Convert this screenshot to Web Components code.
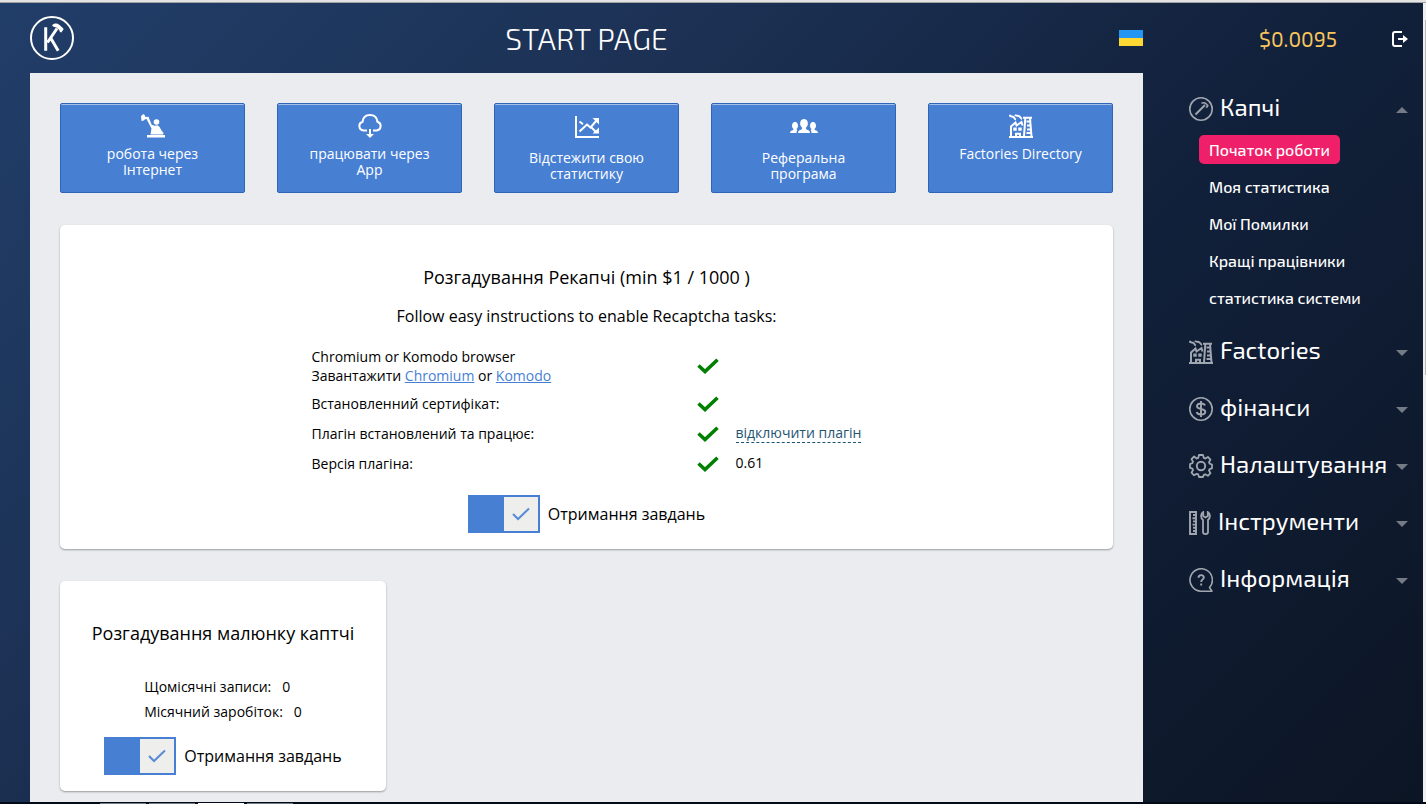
<!DOCTYPE html>
<html lang="uk">
<head>
<meta charset="utf-8">
<title>Start page</title>
<style>
  html, body { margin: 0; height: 100%; }
  body { background: #0d1626; font-family: "Open Sans", "Noto Sans", sans-serif; color: #000; }
</style>
</head>
<body>
<kb-app></kb-app>
<script>
const ICONS = {
  logo: ['0 0 44 44', '<circle cx="22" cy="22" r="21" fill="none" stroke="#fff" stroke-width="2"/><path d="M15.700 11.300v23.400M17.500 26.500l9.500-14M21 22.500l7.200 12.200" fill="none" stroke="#fff" stroke-width="3"/><path d="M22 9.300c2-2.300 5.200-2.400 7.500-.4l3.700 3.300.3 1.300-2.300 3-1.300-.4-.6-2-3-2.600-2.800-.7z" fill="#fff"/>'],
  worker: ['0 0 24 24', '<path d="M0 2l2.500-2 1.500 1.500.5 2.500-1.500 2.500-2.500.5zM4 3l3.500-.2 3.200 8 3 1 3-.5 2.300 2.200 2.500 7h-12l1-6-5-9.500-2 .5z" fill="currentColor"/><circle cx="15.500" cy="8" r="2.800" fill="currentColor"/><path d="M6 21h18v2.500H6z" fill="currentColor"/><path d="M17.500 14.500l4.500 5.500" stroke="currentColor" stroke-width="2"/>'],
  cloud: ['0 0 24 24', '<path d="M9 16.500H5.500A4.500 4.500 0 0 1 4.600 7.700 C5 3.500 8 1 12 1s7 2.500 7.400 6.700a4.500 4.500 0 0 1-.9 8.800H15" fill="none" stroke="currentColor" stroke-width="2"/><path d="M11 15h2v5h3l-4 4-4-4h3z" fill="currentColor"/>'],
  chart: ['0 0 28 28', '<path d="M3 2v21h23" fill="none" stroke="currentColor" stroke-width="2"/><path d="M6.500 17.500l7.500-7 3.500 3 6-7M6.500 7.500l3.500 2.800M18.500 13.500l4 4" fill="none" stroke="currentColor" stroke-width="2"/><path d="M19.500 4H26v6.500zM26 13.500v6h-6.500z" fill="currentColor"/>'],
  people: ['0 0 28 28', '<path d="M8 19c.3-2.500 1.500-2.800 3.500-3.500l.8-1.500c-2-2-2.500-3.500-2-6C11 5.700 12.300 5 14 5s3 .7 3.700 3c.5 2.500 0 4-2 6l.8 1.500c2 .7 3.200 1 3.500 3.500z" fill="currentColor"/><path d="M0 19c.2-2 1.300-2.300 3.200-3l.3-1c-1.500-1.500-1.800-3-1.300-4.800C2.800 8.500 3.800 8 5 8s2.300.5 2.800 2.200c.5 1.800.2 3.300-1.300 4.800l.8.9C6.800 17 6.500 18 6.500 19zM28 19c-.2-2-1.300-2.300-3.200-3l-.3-1c1.500-1.500 1.800-3 1.300-4.800C25.200 8.500 24.200 8 23 8s-2.300.5-2.800 2.200c-.5 1.800-.2 3.300 1.300 4.800l-.8.9c.5 1.100.8 2.100.8 3.100z" fill="currentColor"/>'],
  factory: ['0 0 24 24', '<path d="M0 23h24M2 23V12.500L6.500 8.500l1 3L12.500 8l1 3.500M15 22.500L16.300 4M21 4l1.500 18.500M14 3.800h9M17.500 7.500h3M18 11.500h3.500M18 15.500h3.500M17.500 19h4M7 22.500v-2.800h4v2.800" fill="none" stroke="currentColor" stroke-width="2"/><path d="M4.300 13.500h3.400v3.200H4.300zM9.300 13.500h3.400v3.200H9.300z" fill="currentColor"/><path d="M.5.800c.5 2.500 2.500 1 4 2.200s.7 2 2.500 2.500M6 .8c1 1.700 3 .5 4.500 1.700S12 4.500 13 5" fill="none" stroke="currentColor" stroke-width="2"/>'],
  hammer: ['0 0 24 24', '<circle cx="12" cy="12" r="11.200" fill="none" stroke="currentColor" stroke-width="1.600"/><path d="M6.500 17.500L16 8" stroke="currentColor" stroke-width="2"/><path d="M12.500 6.200c2-.8 3.500-.5 4.500.5l1.800 1.800-1.500 2.300" fill="none" stroke="currentColor" stroke-width="1.600"/>'],
  dollar: ['0 0 24 24', '<circle cx="12" cy="12" r="11.200" fill="none" stroke="currentColor" stroke-width="1.600"/><path d="M16 8.500C15.500 7 14 6.500 12 6.500c-2.300 0-4 .8-4 2.700 0 3.800 8.300 1.800 8.300 5.600 0 1.900-1.800 2.700-4.300 2.700-2.300 0-3.800-.7-4.300-2.500M12 4v16" fill="none" stroke="currentColor" stroke-width="1.900"/>'],
  gear: ['0 0 24 24', '<path d="M10 1h4l.8 2.900 1.500.6 2.600-1.500 2.600 2.600-1.500 2.600.6 1.500 2.400.8v3.800l-2.400.8-.6 1.500 1.500 2.600-2.600 2.600-2.600-1.500-1.500.6L14 23h-4l-.8-2.600-1.500-.6-2.600 1.500-2.600-2.600L4 16.100l-.6-1.500-2.400-.8V10l2.400-.8L4 7.700 2.500 5.100l2.600-2.600L7.700 4.500l1.500-.6z" fill="none" stroke="currentColor" stroke-width="1.800" stroke-linejoin="round"/><circle cx="12" cy="12" r="4.200" fill="none" stroke="currentColor" stroke-width="1.900"/>'],
  tools: ['0 0 22 24', '<path d="M1 1h6v22H1zM7 4H4M7 7.200H3.500M7 10.400H4M7 13.600H3.500M7 16.800H4M7 20H4" fill="none" stroke="currentColor" stroke-width="1.900"/><path d="M14.200 1v4l2.300 1.500L18.800 5V1c2.500 1.500 3 5.500.2 8v12c0 2.700-5 2.700-5 0V9c-2.800-2.500-2.300-6.500.2-8z" fill="none" stroke="currentColor" stroke-width="1.800"/>'],
  help: ['0 0 24 24', '<path d="M20.500 19.500A11.200 11.200 0 1 0 12 23.200h11z" fill="none" stroke="currentColor" stroke-width="1.600" stroke-linejoin="round"/><path d="M9.500 9.800c0-3.500 5.300-3.500 5.300-.4 0 2-2.600 2-2.600 4.600M12.200 15.600v2" fill="none" stroke="currentColor" stroke-width="1.900"/>'],
  exit: ['0 0 16 16', '<path d="M10 1H3a2 2 0 0 0-2 2v10a2 2 0 0 0 2 2h7" fill="none" stroke="currentColor" stroke-width="2"/><path d="M6 7h5V4l5 4-5 4V9H6z" fill="currentColor"/>'],
  tick: ['0 0 22 16', '<path d="M1.500 7.500L8 13.500 20.500 1.800" fill="none" stroke="#008000" stroke-width="3.600"/>'],
  thin: ['0 0 18 14', '<path d="M1 7l5 5L17 1.500" fill="none" stroke="#477fd3" stroke-opacity=".9" stroke-width="2"/>'],
  up: ['0 0 12 6', '<path d="M0 6l6-6 6 6z" fill="currentColor"/>'],
  down: ['0 0 12 6', '<path d="M0 0l6 6 6-6z" fill="currentColor"/>']
};
const icon = (name, w, h = w) => `<svg aria-hidden="true" width="${w}" height="${h}" viewBox="${ICONS[name][0]}">${ICONS[name][1]}</svg>`;
const define = (name, render) => customElements.define(name, class extends HTMLElement {
  connectedCallback() {
    if (!this.shadowRoot) this.attachShadow({ mode: 'open' }).innerHTML = render(this);
  }
});

define('kb-tile', el => `
<style>
  :host { display: block; flex: 1; }
  a { box-sizing: border-box; display: flex; flex-direction: column; align-items: center; gap: 8px; height: 90px; padding: 10px 28px 0; border: 1px solid #2f65b9; border-radius: 2px; background: #477fd3; box-shadow: inset 0 1px #a3bfe9; color: #fff; font-size: 14px; line-height: 16px; text-align: center; text-decoration: none; }
  svg { flex: none; }
</style>
<a href="#">${icon(el.getAttribute('icon'), +el.getAttribute('size') || 24)}<span><slot></slot></span></a>`);

define('kb-card', () => `
<style>
  :host { display: block; box-sizing: border-box; padding: 40px 16px 16px; background: #fff; border-radius: 5px; box-shadow: 0 1px 2px rgba(0,0,0,.35); }
  h2 { margin: 0; font-size: 18px; line-height: 24px; font-weight: 400; text-align: center; white-space: nowrap; }
</style>
<h2><slot name="title"></slot></h2><slot></slot>`);

define('kb-toggle', () => `
<style>
  :host { display: flex; justify-content: center; }
  label { display: flex; align-items: center; gap: 8px; font-size: 16px; line-height: 24px; white-space: nowrap; }
  .box { position: relative; display: flex; }
  input { appearance: none; box-sizing: border-box; margin: 0; width: 72px; height: 38px; border: 2px solid #477fd3; background: linear-gradient(90deg, #477fd3 50%, #eeeeed 50%); }
  svg { position: absolute; right: 10px; top: 12px; pointer-events: none; }
</style>
<label><span class="box"><input type="checkbox" checked>${icon('thin', 18, 14)}</span><span><slot></slot></span></label>`);

define('kb-requirements', () => {
  const row = (label, extra = '') => `<tr><th scope="row">${label}</th><td class="ok">${icon('tick', 22, 16)}</td><td class="extra">${extra}</td></tr>`;
  return `
<style>
  :host { display: block; margin: 15px 0 16px; }
  p { margin: 0 0 15px; font-size: 16px; line-height: 24px; text-align: center; }
  table { border-collapse: collapse; table-layout: fixed; width: 550px; margin: 0 auto; font-size: 14px; line-height: 19px; }
  tr { height: 30px; } tr:first-child { height: 46px; }
  th, td { padding: 0; font-weight: 400; text-align: left; }
  th { width: 376px; }
  tr:not(:first-child) th { padding-bottom: 2px; }
  .ok { width: 40px; text-align: center; } .ok svg { display: block; margin: 0 auto; }
  .extra { padding: 0 0 3px 8px; white-space: nowrap; }
  a { color: #477fd3; }
  button { padding: 0; border: 0; border-bottom: 1px dashed #1d5470; background: none; font: inherit; line-height: 18px; color: #1d5470; }
</style>
<p>Follow easy instructions to enable Recaptcha tasks:</p>
<table>
${row('Chromium or Komodo browser<br>Завантажити <a href="#">Chromium</a> or <a href="#">Komodo</a>')}
${row('Встановленний сертифікат:')}
${row('Плагін встановлений та працює:', '<button type="button">відключити плагін</button>')}
${row('Версія плагіна:', '0.61')}
</table>`; });

define('kb-stats', () => `
<style>
  :host { display: block; margin: 29px 0 13px; font-size: 14px; line-height: 25px; }
  dl { width: fit-content; margin: 0 auto; }
  div { display: flex; gap: 11px; }
  dt, dd { margin: 0; }
</style>
<dl><div><dt>Щомісячні записи:</dt><dd>0</dd></div><div><dt>Місячний заробіток:</dt><dd>0</dd></div></dl>`);

define('kb-nav-group', el => `
<style>
  :host { display: block; font-family: "Exo 2", "Noto Sans", sans-serif; }
  button { display: flex; align-items: center; gap: 7px; width: 100%; height: 34px; padding: 0; border: 0; background: none; font: inherit; font-size: 24px; line-height: 30px; color: #fff; text-align: left; white-space: nowrap; }
  button > svg { flex: none; color: #a0a6af; }
  .label { flex: 1; min-width: 0; padding-bottom: 4px; }
  button > svg:last-child { color: #747b86; margin-top: 2px; }
  .items { display: flex; flex-direction: column; align-items: flex-start; gap: 8px; padding: 9px 0 0 10px; }
  .items[hidden] { display: none; }
</style>
<button type="button" aria-expanded="${el.hasAttribute('open')}">${icon(el.getAttribute('icon'), el.getAttribute('icon') === 'tools' ? 22 : 24, 24)}<span class="label">${el.getAttribute('label')}</span>${icon(el.hasAttribute('open') ? 'up' : 'down', 12, 6)}</button>
<div class="items" ${el.hasAttribute('open') ? '' : 'hidden'}><slot></slot></div>`);

define('kb-nav-item', () => `
<style>
  :host { display: block; }
  a { display: block; padding: 0 10px; border-radius: 5px; font-size: 16px; line-height: 29px; font-weight: 500; color: #fff; text-decoration: none; white-space: nowrap; }
  :host([active]) a { background: #ef2069; }
</style>
<a href="#"><slot></slot></a>`);

define('kb-sidebar', () => `
<style>
  :host { display: block; }
  nav { display: flex; flex-direction: column; gap: 23px; padding: 19px 15px 0 46px; }
</style>
<nav>
<kb-nav-group icon="hammer" label="Капчі" open>
  <kb-nav-item active>Початок роботи</kb-nav-item>
  <kb-nav-item>Моя статистика</kb-nav-item>
  <kb-nav-item>Мої Помилки</kb-nav-item>
  <kb-nav-item>Кращі працівники</kb-nav-item>
  <kb-nav-item>статистика системи</kb-nav-item>
</kb-nav-group>
<kb-nav-group icon="factory" label="Factories"></kb-nav-group>
<kb-nav-group icon="dollar" label="фінанси"></kb-nav-group>
<kb-nav-group icon="gear" label="Налаштування"></kb-nav-group>
<kb-nav-group icon="tools" label="Інструменти"></kb-nav-group>
<kb-nav-group icon="help" label="Інформація"></kb-nav-group>
</nav>`);

define('kb-header', () => `
<style>
  :host { display: grid; grid-template-columns: minmax(0, 1fr) 280px; align-items: center; height: 70px; color: #fff; font-family: "Exo 2", "Noto Sans", sans-serif; }
  .left { display: grid; grid-template-columns: 1fr auto 1fr; align-items: center; padding-left: 30px; }
  a { color: inherit; display: block; } svg { display: block; }
  h1 { margin: 0; font-size: 30px; line-height: 40px; font-weight: 300; }
  .flag { justify-self: end; width: 24px; height: 16px; padding: 0; border: 0; background: linear-gradient(#2196f3 50%, #fdd835 50%); }
  .right { display: flex; align-items: center; justify-content: flex-end; gap: 55px; padding: 2px 15px 0 0; }
  .money { font-size: 21px; line-height: 28px; color: #f9c55c; }
  .right button { padding: 0; border: 0; background: none; color: #fff; }
</style>
<div class="left"><a href="#" aria-label="Home">${icon('logo', 44)}</a><h1>START PAGE</h1><button class="flag" type="button" aria-label="Language"></button></div>
<div class="right"><span class="money">$0.0095</span><button type="button" aria-label="Exit">${icon('exit', 16)}</button></div>`);

define('kb-app', () => `
<style>
  :host { display: grid; grid-template-rows: 3px minmax(0, 1fr) 2px; height: 100vh; }
  .top { background: linear-gradient(#e3e3e3 2px, #a2a2a2 2px); }
  .view { display: grid; grid-template-columns: minmax(0, 1fr) 3px; min-height: 0; }
  .page { display: grid; grid-template-rows: auto 1fr; overflow: auto; scrollbar-width: none; background: linear-gradient(135deg, #213e69, #1c3154 32%, #11203a 62%, #0c1524); }
  .body { display: grid; grid-template-columns: minmax(0, 1fr) 280px; }
  main { display: flex; flex-direction: column; align-items: flex-start; gap: 32px; margin-left: 30px; padding: 30px 30px 11px; background: #ebecf0; }
  .tiles { display: flex; gap: 32px; width: 100%; }
  .wide { width: 100%; }
  .small { width: 326px; }
  .scroll { padding: 17px 0 0 2px; background: #f0f0f0; }
  .scroll::before { content: ""; display: block; height: 355px; background: #b8b8b8; }
  .bottom { display: flex; gap: 3px; padding: 1px 0 0 100px; background: #020a18; }
  .bottom i { width: 46px; background: #737982; } .bottom i:nth-child(3) { background: #fff; }
</style>
<div class="top"></div>
<div class="view">
  <div class="page">
    <kb-header></kb-header>
    <div class="body">
      <main>
        <div class="tiles">
          <kb-tile icon="worker">робота через Інтернет</kb-tile>
          <kb-tile icon="cloud">працювати через App</kb-tile>
          <kb-tile icon="chart" size="28">Відстежити свою статистику</kb-tile>
          <kb-tile icon="people" size="28">Реферальна програма</kb-tile>
          <kb-tile icon="factory">Factories Directory</kb-tile>
        </div>
        <kb-card class="wide"><span slot="title">Розгадування Рекапчі (min $1 / 1000 )</span><kb-requirements></kb-requirements><kb-toggle>Отримання завдань</kb-toggle></kb-card>
        <kb-card class="small"><span slot="title">Розгадування малюнку каптчі</span><kb-stats></kb-stats><kb-toggle>Отримання завдань</kb-toggle></kb-card>
      </main>
      <kb-sidebar></kb-sidebar>
    </div>
  </div>
  <div class="scroll"></div>
</div>
<div class="bottom"><i></i><i></i><i></i><i></i></div>`);
</script>
</body>
</html>
